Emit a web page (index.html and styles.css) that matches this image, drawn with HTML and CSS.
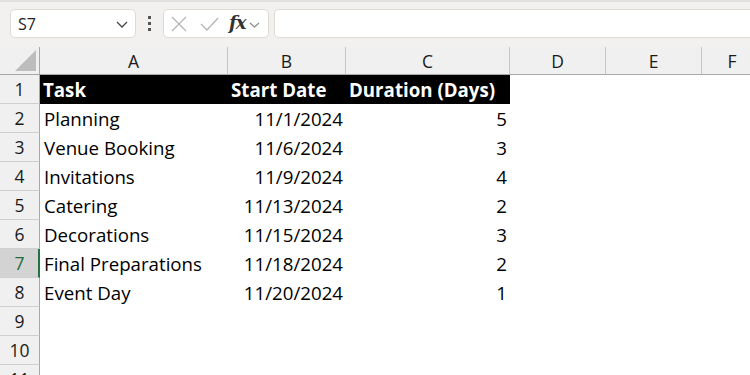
FILE: index.html
```html
<!DOCTYPE html>
<html>
<head>
<meta charset="utf-8">
<link rel="stylesheet" href="styles.css">
</head>
<body>
<div class="toolbar">
  <div class="namebox">
    <span class="name">S7</span>
    <svg class="chev" width="12" height="7" viewBox="0 0 12 7"><path d="M1 1 L6 6 L11 1" fill="none" stroke="#444" stroke-width="1.3"/></svg>
  </div>
  <div class="dots"><i></i><i></i><i></i></div>
  <div class="fbtns">
    <svg class="x" width="16" height="16" viewBox="0 0 16 16"><path d="M1 1 L15 15 M15 1 L1 15" stroke="#b5b5b5" stroke-width="1.3"/></svg>
    <svg class="ok" width="19" height="14" viewBox="0 0 19 14"><path d="M1 7 L7 13 L18 1" fill="none" stroke="#b5b5b5" stroke-width="1.3"/></svg>
    <span class="fx">fx</span>
    <svg class="chev2" width="11" height="6" viewBox="0 0 11 6"><path d="M1 1 L5.5 5 L10 1" fill="none" stroke="#888" stroke-width="1.2"/></svg>
  </div>
  <div class="formula"></div>
</div>
<div class="sheet">
  <div class="corner"><span class="tri"></span></div>
  <div class="ch">A</div><div class="ch">B</div><div class="ch">C</div><div class="ch">D</div><div class="ch">E</div><div class="ch last">F</div>

  <div class="rh">1</div>
  <div class="c hd">Task</div><div class="c hd">Start Date</div><div class="c hd">Duration (Days)</div><div class="c"></div><div class="c"></div><div class="c"></div>

  <div class="rh">2</div>
  <div class="c">Planning</div><div class="c r">11/1/2024</div><div class="c r">5</div><div class="c"></div><div class="c"></div><div class="c"></div>

  <div class="rh">3</div>
  <div class="c">Venue Booking</div><div class="c r">11/6/2024</div><div class="c r">3</div><div class="c"></div><div class="c"></div><div class="c"></div>

  <div class="rh">4</div>
  <div class="c">Invitations</div><div class="c r">11/9/2024</div><div class="c r">4</div><div class="c"></div><div class="c"></div><div class="c"></div>

  <div class="rh">5</div>
  <div class="c">Catering</div><div class="c r">11/13/2024</div><div class="c r">2</div><div class="c"></div><div class="c"></div><div class="c"></div>

  <div class="rh">6</div>
  <div class="c">Decorations</div><div class="c r">11/15/2024</div><div class="c r">3</div><div class="c"></div><div class="c"></div><div class="c"></div>

  <div class="rh sel">7</div>
  <div class="c">Final Preparations</div><div class="c r">11/18/2024</div><div class="c r">2</div><div class="c"></div><div class="c"></div><div class="c"></div>

  <div class="rh">8</div>
  <div class="c">Event Day</div><div class="c r">11/20/2024</div><div class="c r">1</div><div class="c"></div><div class="c"></div><div class="c"></div>

  <div class="rh">9</div>
  <div class="c"></div><div class="c"></div><div class="c"></div><div class="c"></div><div class="c"></div><div class="c"></div>

  <div class="rh">10</div>
  <div class="c"></div><div class="c"></div><div class="c"></div><div class="c"></div><div class="c"></div><div class="c"></div>

  <div class="rh">11</div>
  <div class="c"></div><div class="c"></div><div class="c"></div><div class="c"></div><div class="c"></div><div class="c"></div>
</div>
</body>
</html>
```
FILE: styles.css
```css
html, body {
  margin: 0;
  padding: 0;
  background: #fff;
  overflow: hidden;
  width: 750px;
  height: 375px;
  font-family: "Open Sans", "Noto Sans", sans-serif;
}
.toolbar {
  height: 47px;
  box-sizing: border-box;
  background: #f3f1ef;
  border-top: 2px solid #e4e0dd;
  padding: 7px 0 0 10px;
  display: flex;
  align-items: flex-start;
}
.namebox {
  width: 126px;
  height: 29px;
  box-sizing: border-box;
  background: #fff;
  border: 1px solid #dedad6;
  border-radius: 5px;
  display: flex;
  align-items: center;
  justify-content: space-between;
  padding: 0 7px 0 7px;
}
.name {
  font-size: 16px;
  color: #222;
}
.chev { margin-top: 1px; }
.dots {
  width: 27px;
  height: 29px;
  display: flex;
  flex-direction: column;
  align-items: center;
  justify-content: center;
  gap: 3px;
}
.dots i {
  display: block;
  width: 3px;
  height: 3px;
  background: #555;
}
.fbtns {
  width: 106px;
  height: 29px;
  box-sizing: border-box;
  background: #fff;
  border: 1px solid #dedad6;
  border-radius: 5px;
  display: flex;
  align-items: center;
  padding-left: 7px;
}
.fbtns .x { margin-right: 13px; }
.fbtns .ok { margin-right: 10px; }
.fx {
  font-family: "DejaVu Serif", "Liberation Serif", serif;
  font-style: italic;
  font-weight: 700;
  font-size: 18px;
  color: #333;
  letter-spacing: -1px;
  margin-top: -3px;
  margin-right: 4px;
}
.chev2 { margin-top: 2px; }
.formula {
  flex: 1;
  height: 29px;
  margin-left: 5px;
  box-sizing: border-box;
  background: #fff;
  border: 1px solid #dedad6;
  border-right: none;
  border-radius: 5px 0 0 5px;
}
.sheet {
  display: grid;
  grid-template-columns: 40px 188px 118px 164px 96px 96px 60px;
  grid-template-rows: 28px repeat(11, 29px);
}
.corner {
  background: #f0f0f0;
  border-right: 1px solid #a8a8a8;
  border-bottom: 1px solid #a8a8a8;
  position: relative;
}
.tri {
  position: absolute;
  right: 3px;
  bottom: 3px;
  width: 0;
  height: 0;
  border-left: 21px solid transparent;
  border-bottom: 21px solid #bdbdbd;
}
.ch {
  background: #f0f0f0;
  border-right: 1px solid #c6c6c6;
  border-bottom: 1px solid #a8a8a8;
  display: flex;
  align-items: center;
  justify-content: center;
  font-size: 17.5px;
  color: #1a1a1a;
  padding-top: 1px;
}
.ch.last { border-right: none; }
.rh {
  background: #f0f0f0;
  border-right: 1px solid #a8a8a8;
  border-bottom: 1px solid #cfcfcf;
  display: flex;
  align-items: center;
  justify-content: center;
  font-size: 17.5px;
  color: #1a1a1a;
}
.rh.sel {
  background: #d3d3d3;
  color: #1e6b3c;
  border-right: 2px solid #217346;
  padding-left: 1px;
}
.c {
  font-size: 18.7px;
  color: #000;
  display: flex;
  align-items: center;
  padding: 0 3px 0 4px;
  white-space: nowrap;
  overflow: visible;
}
.c.r { justify-content: flex-end; }
.c.hd {
  background: #000;
  color: #fff;
  font-weight: 700;
  padding-left: 3px;
}
```
